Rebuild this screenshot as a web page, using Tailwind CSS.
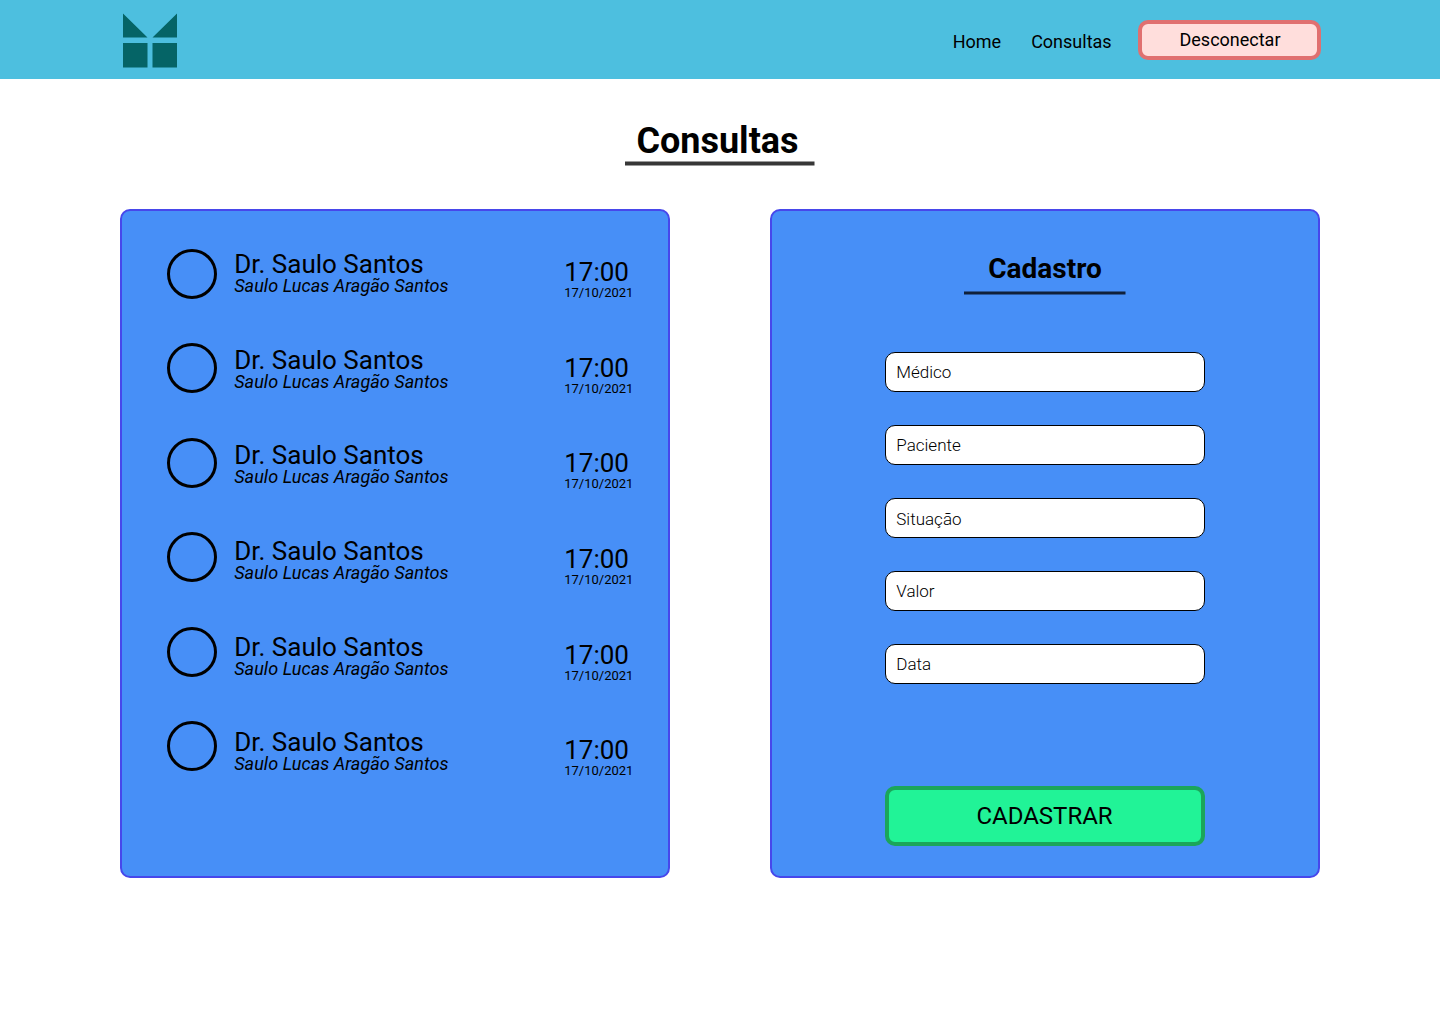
<!DOCTYPE html>
<html lang="pt-BR">
<head>
<meta charset="utf-8">
<title>Consultas</title>
<script src="https://cdn.jsdelivr.net/npm/@tailwindcss/browser@4"></script>
</head>
<body class="min-h-screen bg-white font-[Roboto,sans-serif] text-black">
<header class="flex h-[79px] items-start bg-[#4dbfdf] pl-[123px] pr-[119px]">
  <svg class="mt-[13px]" width="54" height="55" viewBox="0 0 54 55" fill="#056466">
    <path d="M0 .5 24.5 24.5H0zM54 .5V24.5H29.5zM0 30H24.5V54.5H0zM29.5 30H54V54.5H29.5z"/>
  </svg>
  <nav class="ml-auto flex text-lg leading-[22px]">
    <a class="mt-[31px] mr-[30px]">Home</a>
    <a class="mt-[31px] mr-[26.4px]">Consultas</a>
    <button class="mt-5 h-10 w-[183px] rounded-[10px] border-4 border-[#e07070] bg-[#ffdedc] pb-px pl-px leading-[22px]">Desconectar</button>
  </nav>
</header>
<main class="flex flex-col items-center">
  <h1 class="mt-[42px] mr-[5px] text-4xl leading-10 font-bold">Consultas</h1>
  <svg width="190" height="5" viewBox="0 0 190 5"><path d="M0 2.5H189.5" stroke="#373737" stroke-width="4"/></svg>
  <div class="mt-[43px] flex gap-[100px]">
    <section class="flex h-[669px] w-[550px] rounded-[10px] border-2 border-[#4747eb] bg-[#478ff7] pl-[45px]">
      <div id="avatars" class="mt-[38px] flex h-[522px] flex-col justify-between"></div>
      <div id="names" class="mt-[40px] ml-[17.2px] flex w-[330px] flex-col"></div>
      <div id="times" class="mt-[48px] flex flex-col"></div>
    </section>
    <section class="flex h-[669px] w-[550px] flex-col items-center rounded-[10px] border-2 border-[#4747eb] bg-[#478ff7]">
      <h2 class="mt-[42px] text-[28px] leading-8 font-bold">Cadastro</h2>
      <svg class="mt-[6px]" width="162" height="4" viewBox="0 0 162 4"><path d="M0 2H161.5" stroke="#10213b" stroke-width="3"/></svg>
      <form class="mt-[57px] flex flex-col">
        <div class="flex flex-col gap-[33px] text-[17px] leading-5 font-light">
          <div class="h-10 w-80 rounded-[10px] border border-black bg-white px-[10.3px] pt-[9px]">Médico</div>
          <div class="h-10 w-80 rounded-[10px] border border-black bg-white px-[10.3px] pt-[9px]">Paciente</div>
          <div class="h-10 w-80 rounded-[10px] border border-black bg-white px-[10.3px] pt-2.5">Situação</div>
          <div class="h-10 w-80 rounded-[10px] border border-black bg-white px-[10.3px] pt-[9px]">Valor</div>
          <div class="h-10 w-80 rounded-[10px] border border-black bg-white px-[10.3px] pt-[9px]">Data</div>
        </div>
        <button type="button" class="mt-[102px] h-[60px] w-80 rounded-[10px] border-4 border-[#1ba65a] bg-[#21f397] pr-px text-2xl">CADASTRAR</button>
      </form>
    </section>
  </div>
</main>
<script>
const rows = Array.from({ length: 6 }, () => ({ doctor: 'Dr. Saulo Santos', patient: 'Saulo Lucas Aragão Santos', time: '17:00', date: '17/10/2021' }));
const fill = (id, html) => { document.getElementById(id).innerHTML = rows.map(html).join(''); };
fill('avatars', () => '<span class="block size-[50px] rounded-full border-3 border-black"></span>');
fill('names', r => `<div class="h-[95.67px]"><p class="text-[26px] leading-[26px]">${r.doctor}</p><p class="text-lg leading-[18px] tracking-[0.06px] italic">${r.patient}</p></div>`);
fill('times', r => `<div class="h-[95.67px]"><p class="text-[26px] leading-[26px]">${r.time}</p><p class="text-[13px] leading-[15px]">${r.date}</p></div>`);
</script>
</body>
</html>
